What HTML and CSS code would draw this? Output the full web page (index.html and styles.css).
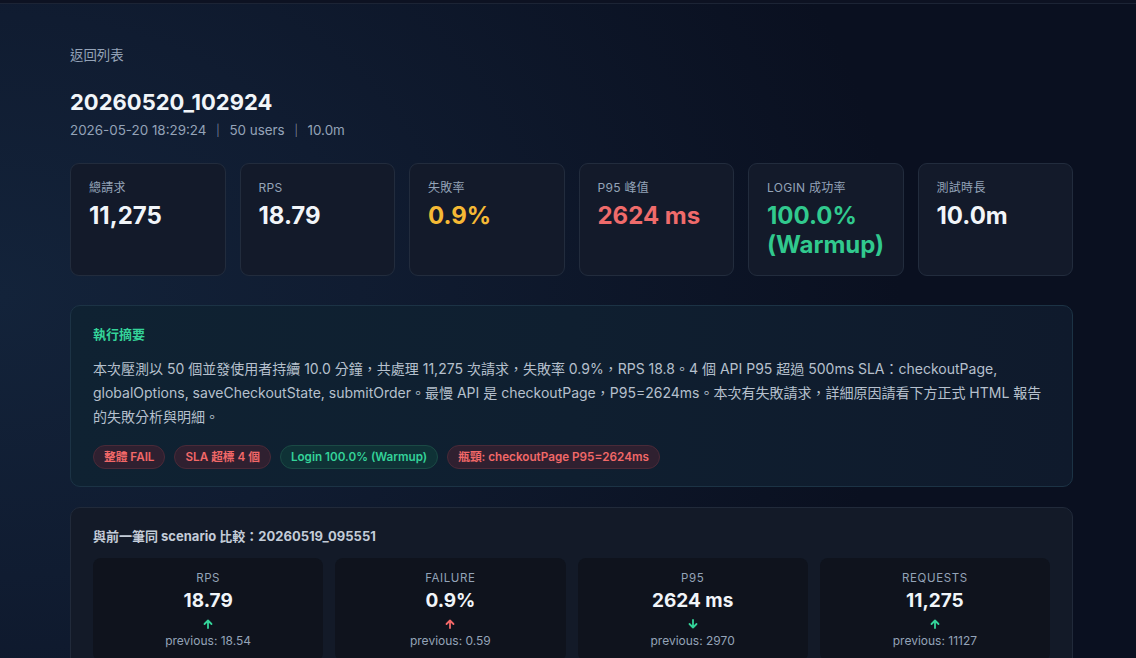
FILE: index.html
```html
<!DOCTYPE html>
<html lang="zh-Hant">
<head>
<meta charset="utf-8">
<title>20260520_102924</title>
<link rel="stylesheet" href="styles.css">
</head>
<body>
<div class="topbar"></div>
<main class="page">
  <a class="back" href="#">返回列表</a>
  <h1 class="title">20260520_102924</h1>
  <div class="meta">2026-05-20 18:29:24 <span class="sep">│</span> 50 users <span class="sep">│</span> 10.0m</div>

  <section class="stats">
    <div class="stat"><div class="stat-label">總請求</div><div class="stat-value">11,275</div></div>
    <div class="stat"><div class="stat-label">RPS</div><div class="stat-value">18.79</div></div>
    <div class="stat"><div class="stat-label">失敗率</div><div class="stat-value warn">0.9%</div></div>
    <div class="stat"><div class="stat-label">P95 峰值</div><div class="stat-value bad">2624 ms</div></div>
    <div class="stat"><div class="stat-label">LOGIN 成功率</div><div class="stat-value good">100.0% (Warmup)</div></div>
    <div class="stat"><div class="stat-label">測試時長</div><div class="stat-value">10.0m</div></div>
  </section>

  <section class="summary">
    <h2 class="summary-title">執行摘要</h2>
    <p class="summary-text">本次壓測以 50 個並發使用者持續 10.0 分鐘，共處理 11,275 次請求，失敗率 0.9%，RPS 18.8。4 個 API P95 超過 500ms SLA：checkoutPage, globalOptions, saveCheckoutState, submitOrder。最慢 API 是 checkoutPage，P95=2624ms。本次有失敗請求，詳細原因請看下方正式 HTML 報告的失敗分析與明細。</p>
    <div class="pills">
      <span class="pill red">整體 FAIL</span>
      <span class="pill red">SLA 超標 4 個</span>
      <span class="pill green">Login 100.0% (Warmup)</span>
      <span class="pill red">瓶頸: checkoutPage P95=2624ms</span>
    </div>
  </section>

  <section class="compare">
    <h2 class="compare-title">與前一筆同 scenario 比較：20260519_095551</h2>
    <div class="compare-grid">
      <div class="cmp">
        <div class="cmp-label">RPS</div>
        <div class="cmp-value">18.79</div>
        <div class="cmp-arrow good"><svg viewBox="0 0 10 10" width="10" height="10"><path d="M5 9V1.5M1.5 5L5 1.5 8.5 5" fill="none" stroke="currentColor" stroke-width="1.8" stroke-linecap="round" stroke-linejoin="round"/></svg></div>
        <div class="cmp-prev">previous: 18.54</div>
      </div>
      <div class="cmp">
        <div class="cmp-label">FAILURE</div>
        <div class="cmp-value">0.9%</div>
        <div class="cmp-arrow bad"><svg viewBox="0 0 10 10" width="10" height="10"><path d="M5 9V1.5M1.5 5L5 1.5 8.5 5" fill="none" stroke="currentColor" stroke-width="1.8" stroke-linecap="round" stroke-linejoin="round"/></svg></div>
        <div class="cmp-prev">previous: 0.59</div>
      </div>
      <div class="cmp">
        <div class="cmp-label">P95</div>
        <div class="cmp-value">2624 ms</div>
        <div class="cmp-arrow good"><svg viewBox="0 0 10 10" width="10" height="10"><path d="M5 1v7.5M1.5 5L5 8.5 8.5 5" fill="none" stroke="currentColor" stroke-width="1.8" stroke-linecap="round" stroke-linejoin="round"/></svg></div>
        <div class="cmp-prev">previous: 2970</div>
      </div>
      <div class="cmp">
        <div class="cmp-label">REQUESTS</div>
        <div class="cmp-value">11,275</div>
        <div class="cmp-arrow good"><svg viewBox="0 0 10 10" width="10" height="10"><path d="M5 9V1.5M1.5 5L5 1.5 8.5 5" fill="none" stroke="currentColor" stroke-width="1.8" stroke-linecap="round" stroke-linejoin="round"/></svg></div>
        <div class="cmp-prev">previous: 11127</div>
      </div>
    </div>
  </section>
</main>
</body>
</html>
```

FILE: styles.css
```css
* { box-sizing: border-box; }
html, body { margin: 0; padding: 0; }
body {
  height: 658px;
  background:
    radial-gradient(ellipse 900px 700px at 0% 45%, #13233a 0%, #101c31 40%, rgba(11,17,32,0) 100%),
    #0a1020;
  color: #e5e7eb;
  font-family: Inter, "Noto Sans CJK TC", "Noto Sans", sans-serif;
  overflow: hidden;
}
.topbar {
  height: 4px;
  background: #0d1222;
  border-bottom: 1px solid #1c2435;
}
.page {
  width: 1003px;
  margin-left: 70px;
  padding-top: 41px;
}
.back {
  display: block;
  color: #94a3b8;
  font-size: 13.4px;
  line-height: 20px;
  text-decoration: none;
}
.title {
  margin: 22px 0 0;
  font-size: 22px;
  line-height: 30px;
  font-weight: 700;
  color: #f1f5f9;
}
.meta {
  margin-top: 3px;
  font-size: 13.4px;
  line-height: 20px;
  color: #94a3b8;
}
.sep { color: #a3afc0; padding: 0 1px; }

.stats {
  margin-top: 23px;
  display: grid;
  grid-template-columns: repeat(6, 1fr);
  gap: 14px;
}
.stat {
  height: 113px;
  background: #131a2a;
  border: 1px solid #222c3d;
  border-radius: 9px;
  padding: 16px 18px;
}
.stat-label {
  font-size: 12px;
  line-height: 16px;
  color: #94a3b8;
  letter-spacing: 0.3px;
}
.stat-value {
  margin-top: 5px;
  font-size: 24px;
  line-height: 29px;
  font-weight: 700;
  color: #f1f5f9;
}
.stat-value.warn { color: #f5b935; }
.stat-value.bad { color: #ef6b6b; }
.stat-value.good { color: #31c98e; }

.summary {
  margin-top: 29px;
  background: linear-gradient(90deg, #0f2232 0%, #0f1f30 50%, #0f1a2c 100%);
  border: 1px solid #1c3345;
  border-radius: 10px;
  padding: 18px 22px 17px;
}
.summary-title {
  margin: 0;
  font-size: 13px;
  line-height: 20px;
  font-weight: 700;
  color: #34d399;
}
.summary-text {
  margin: 13px 0 0;
  font-size: 14px;
  line-height: 24px;
  color: #b6c0cd;
}
.pills {
  margin-top: 16px;
  display: flex;
  gap: 9px;
}
.pill {
  display: inline-block;
  height: 24px;
  line-height: 22px;
  padding: 0 10px;
  border-radius: 12px;
  font-size: 11.7px;
  font-weight: 600;
}
.pill.red {
  background: #2f2030;
  border: 1px solid #4a2a38;
  color: #f26868;
}
.pill.green {
  background: #0f3236;
  border: 1px solid #1b4a45;
  color: #34d399;
}

.compare {
  margin-top: 20px;
  background: #131a28;
  border: 1px solid #212a3a;
  border-radius: 10px;
  padding: 18px 22px 0;
  height: 200px;
}
.compare-title {
  margin: 0;
  font-size: 13px;
  line-height: 20px;
  font-weight: 700;
  color: #c3ccd8;
}
.compare-grid {
  margin-top: 12px;
  display: grid;
  grid-template-columns: repeat(4, 1fr);
  gap: 12px;
}
.cmp {
  background: #0f131d;
  border-radius: 8px;
  padding: 12px 10px 12px;
  text-align: center;
}
.cmp-label {
  font-size: 11.5px;
  line-height: 16px;
  color: #94a3b8;
  letter-spacing: 0.6px;
}
.cmp-value {
  margin-top: 2px;
  font-size: 19px;
  line-height: 25px;
  font-weight: 700;
  color: #f1f5f9;
}
.cmp-arrow {
  margin-top: 2px;
  height: 18px;
  display: flex;
  align-items: center;
  justify-content: center;
}
.cmp-arrow.good { color: #34d399; }
.cmp-arrow.bad { color: #f26868; }
.cmp-prev {
  margin-top: 0;
  font-size: 12px;
  line-height: 16px;
  color: #94a3b8;
}
```
